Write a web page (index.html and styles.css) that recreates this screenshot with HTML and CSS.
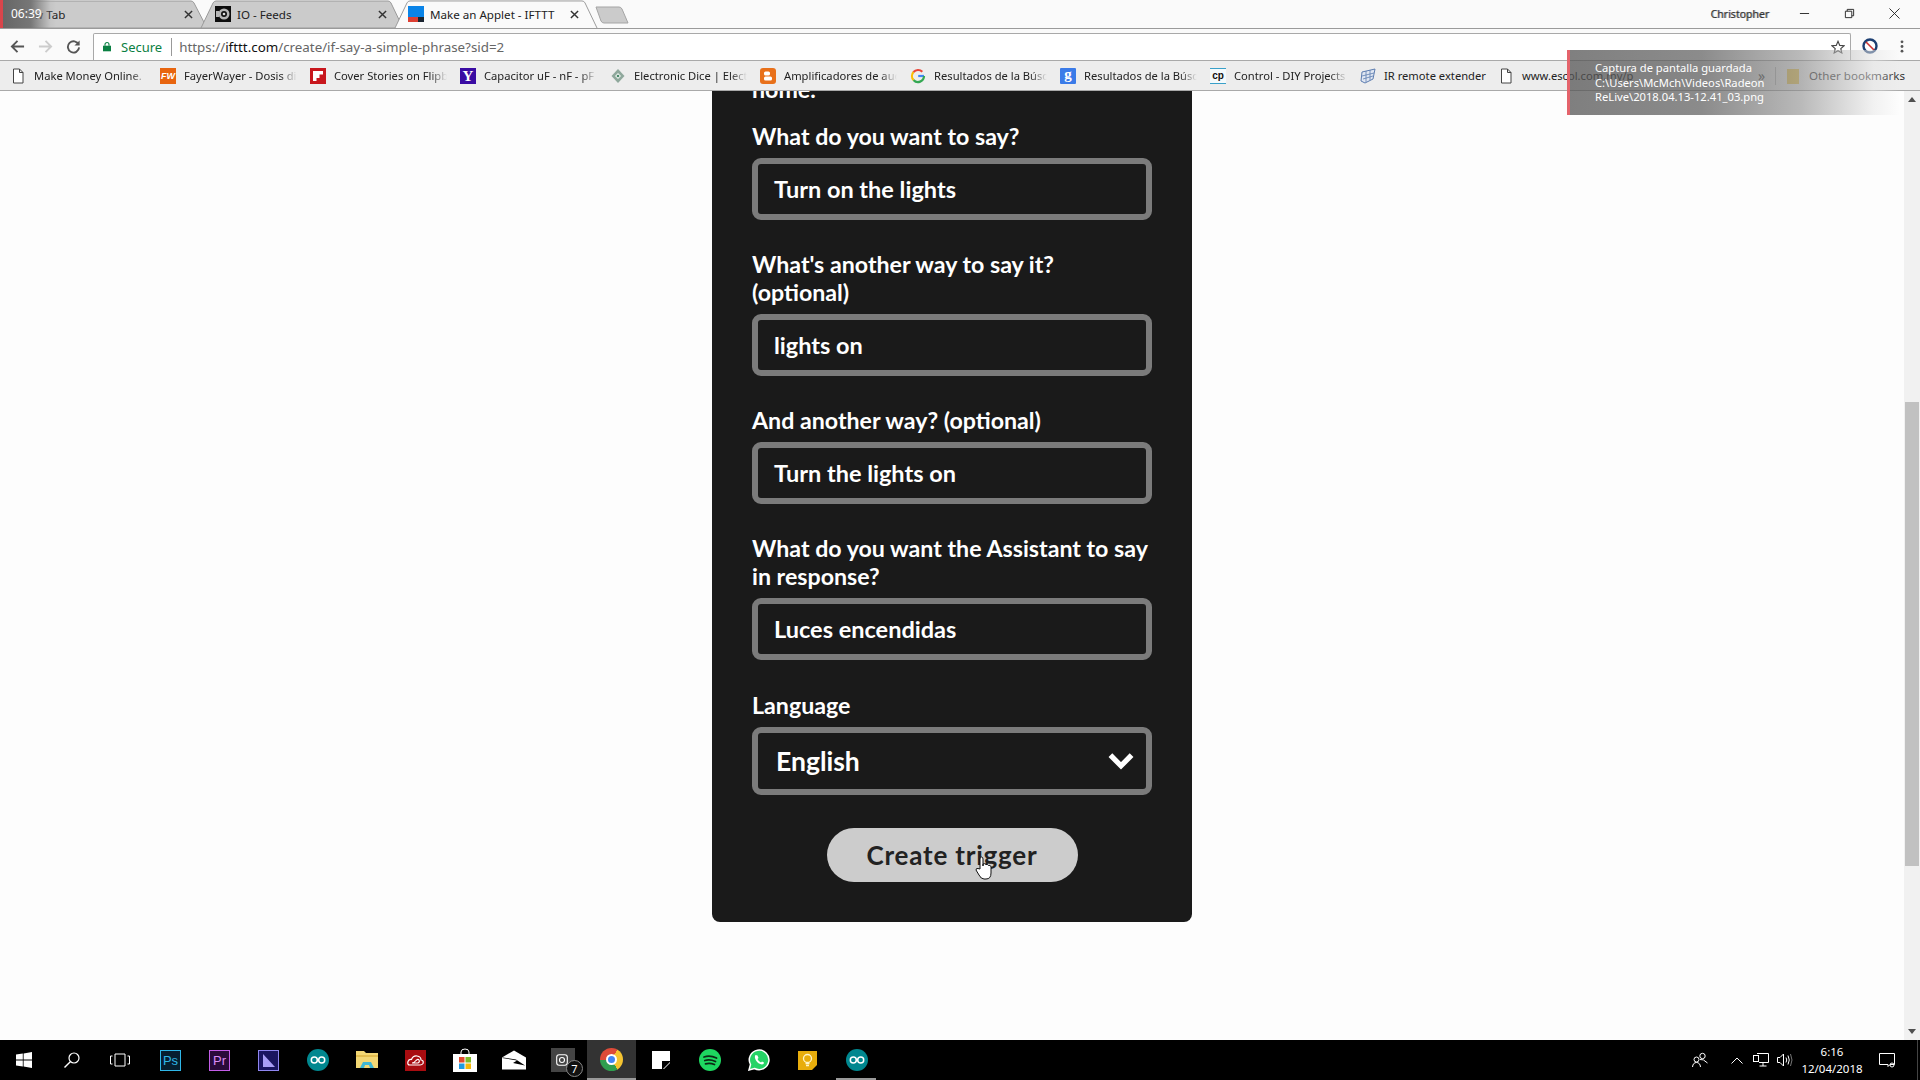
FILE: index.html
```html
<!DOCTYPE html>
<html lang="en">
<head>
<meta charset="utf-8">
<title>Make an Applet - IFTTT</title>
<link rel="stylesheet" href="styles.css">
</head>
<body>
<header class="chrome">
  <div class="tabstrip">
    <div class="tab tab-first">
      <svg class="tab-bg" viewBox="0 0 208 28" preserveAspectRatio="none"><path d="M-6 28V1H191Q193 1 194 3L207 28Z" fill="#cbcbcb" stroke="#9a9a9a"/></svg>
      <span class="tab-title tab-title-new">New Tab</span>
      <svg class="tab-x" viewBox="0 0 10 10"><path d="M1 1L9 9M9 1L1 9" stroke="#333" stroke-width="1.6"/></svg>
    </div>
    <div class="tab tab-second">
      <svg class="tab-bg" viewBox="0 0 204 28" preserveAspectRatio="none"><path d="M1 28L13 3Q14 1 16 1H188Q190 1 191 3L203 28Z" fill="#cbcbcb" stroke="#9a9a9a"/></svg>
      <svg class="fav" viewBox="0 0 16 16"><rect width="16" height="16" fill="#0d0d0d"/><circle cx="9" cy="8" r="5.5" fill="#b5b5b5"/><circle cx="9" cy="8" r="3" fill="#111"/><circle cx="9" cy="8" r="1.3" fill="#ddd"/><rect x="1" y="5" width="3" height="6" fill="#b5b5b5"/></svg>
      <span class="tab-title">IO - Feeds</span>
      <svg class="tab-x" viewBox="0 0 10 10"><path d="M1 1L9 9M9 1L1 9" stroke="#333" stroke-width="1.6"/></svg>
    </div>
    <div class="tab tab-active">
      <svg class="tab-bg" viewBox="0 0 204 29" preserveAspectRatio="none"><path d="M1 29L13 3Q14 1 16 1H188Q190 1 191 3L203 29" fill="#fafafa" stroke="#9a9a9a"/></svg>
      <svg class="fav" viewBox="0 0 16 16"><rect width="16" height="11" fill="#0a84e8"/><rect y="11" width="10" height="5" fill="#dd3f33"/><rect x="10" y="11" width="6" height="5" fill="#1b2430"/></svg>
      <span class="tab-title">Make an Applet - IFTTT</span>
      <svg class="tab-x" viewBox="0 0 10 10"><path d="M1 1L9 9M9 1L1 9" stroke="#333" stroke-width="1.6"/></svg>
    </div>
    <svg class="newtab" viewBox="0 0 34 18"><path d="M1 1H24Q26 1 27 3L33 17H9Q7 17 6 15Z" fill="#cbcbcb" stroke="#a5a5a5"/></svg>
    <div class="window-area">
      <span class="profile">Christopher</span>
      <svg class="win-btn" viewBox="0 0 12 12"><path d="M1 6H11" stroke="#222"/></svg>
      <svg class="win-btn" viewBox="0 0 12 12"><path d="M1.5 3.5H8.5V10.5H1.5ZM3.5 3.5V1.5H10.5V8.5H8.5" fill="none" stroke="#222"/></svg>
      <svg class="win-btn" viewBox="0 0 12 12"><path d="M.5 .5L11.5 11.5M11.5 .5L.5 11.5" stroke="#222"/></svg>
    </div>
  </div>
  <div class="toolbar">
    <svg class="nav" viewBox="0 0 16 16"><path d="M15 8H2M8 2L2 8L8 14" fill="none" stroke="#555" stroke-width="2"/></svg>
    <svg class="nav" viewBox="0 0 16 16"><path d="M1 8H14M8 2L14 8L8 14" fill="none" stroke="#ccc" stroke-width="2"/></svg>
    <svg class="nav" viewBox="0 0 16 16"><path d="M13.5 6A6 6 0 1 0 14 9" fill="none" stroke="#555" stroke-width="2"/><path d="M14.5 1.5V7H9Z" fill="#555"/></svg>
    <div class="omnibox">
      <svg class="lock" viewBox="0 0 10 12"><path d="M2.5 5V3.5A2.5 2.5 0 0 1 7.5 3.5V5" fill="none" stroke="#0b8043" stroke-width="1.4"/><rect y="5" width="10" height="7" fill="#0b8043"/></svg>
      <span class="secure">Secure</span>
      <span class="omni-sep"></span>
      <span class="url"><span class="url-dim">https://</span><span class="url-host">ifttt.com</span><span class="url-dim">/create/if-say-a-simple-phrase?sid=2</span></span>
      <svg class="star" viewBox="0 0 16 16"><path d="M8 1.5L10 6.2L15 6.6L11.2 9.9L12.4 14.8L8 12.2L3.6 14.8L4.8 9.9L1 6.6L6 6.2Z" fill="none" stroke="#444" stroke-width="1.3"/></svg>
    </div>
    <svg class="ext" viewBox="0 0 16 16"><circle cx="8" cy="8" r="6.5" fill="#fff" stroke="#1d3f72" stroke-width="2.4"/><path d="M4 4L12 12" stroke="#c33" stroke-width="1.6"/></svg>
    <svg class="menu" viewBox="0 0 4 16"><circle cx="2" cy="3" r="1.5" fill="#555"/><circle cx="2" cy="8" r="1.5" fill="#555"/><circle cx="2" cy="13" r="1.5" fill="#555"/></svg>
  </div>
  <nav class="bookmarks">
    <a class="bm"><svg class="fav" viewBox="0 0 16 16"><path d="M3.5 1H9.5L13 4.5V15H3.5ZM9.5 1V4.5H13" fill="#fff" stroke="#444"/></svg><span class="bm-text">Make Money Online.</span></a>
    <a class="bm"><span class="fav fav-fw">FW</span><span class="bm-text">FayerWayer - Dosis diarias</span></a>
    <a class="bm"><svg class="fav" viewBox="0 0 16 16"><rect width="16" height="16" fill="#c8171d"/><path d="M3 3H13V6.5H9.5V10H6.500V13H3Z" fill="#fff"/></svg><span class="bm-text">Cover Stories on Flipboard</span></a>
    <a class="bm"><span class="fav fav-y">Y</span><span class="bm-text">Capacitor uF - nF - pF</span></a>
    <a class="bm"><svg class="fav" viewBox="0 0 16 16"><path d="M8 1L14.500 8L8 15L1.500 8Z" fill="#8fa89c"/><path d="M8 5L11 8L8 11L5 8Z" fill="#eef3ef"/><circle cx="8" cy="8" r="1.300" fill="#4a8a6a"/></svg><span class="bm-text">Electronic Dice | Electronics</span></a>
    <a class="bm"><svg class="fav" viewBox="0 0 16 16"><rect width="16" height="16" rx="3" fill="#e8701a"/><rect x="4" y="3.500" width="6" height="4" rx="1.500" fill="#fff"/><rect x="4" y="8.500" width="8" height="4" rx="1.500" fill="#fff"/></svg><span class="bm-text">Amplificadores de audio</span></a>
    <a class="bm"><svg class="fav" viewBox="0 0 16 16"><path d="M14 8H8.200" fill="none" stroke="#4285f4" stroke-width="2.200"/><path d="M14 8A6 6 0 0 1 3.500 12" fill="none" stroke="#34a853" stroke-width="2.200"/><path d="M3.500 12A6 6 0 0 1 3.500 4" fill="none" stroke="#fbbc05" stroke-width="2.200"/><path d="M3.500 4A6 6 0 0 1 12.300 3.800" fill="none" stroke="#ea4335" stroke-width="2.200"/></svg><span class="bm-text">Resultados de la Búsqueda</span></a>
    <a class="bm"><span class="fav fav-g">g</span><span class="bm-text">Resultados de la Búsqueda</span></a>
    <a class="bm"><span class="fav fav-cp">cp</span><span class="bm-text">Control - DIY Projects</span></a>
    <a class="bm bm-ir"><svg class="fav" viewBox="0 0 16 16"><path d="M2 4L15 1L13 11L5 15L1 13Z" fill="#dfe6f2" stroke="#5d7db0"/><path d="M2 8L14 5M3 11L13 8M6 3V14M10 2V12" stroke="#5d7db0" stroke-width=".8"/></svg><span class="bm-plain">IR remote extender</span></a>
    <a class="bm bm-www"><svg class="fav" viewBox="0 0 16 16"><path d="M3.500 1H9.500L13 4.500V15H3.500ZM9.500 1V4.500H13" fill="#fff" stroke="#444"/></svg><span class="bm-plain">www.escol.com.my/p</span></a>
    <span class="bm-more">»</span>
    <span class="bm-sep"></span>
    <svg class="folder" viewBox="0 0 12 16"><path d="M0 1H12V16H0Z" fill="#e6c65c"/></svg>
    <span class="bm-other">Other bookmarks</span>
  </nav>
</header>

<div class="viewport">
  <main class="page">
    <form class="card">
      <p class="intro">home.</p>
      <div class="field">
        <label class="label">What do you want to say?</label>
        <div class="input">Turn on the lights</div>
      </div>
      <div class="field">
        <label class="label">What's another way to say it? (optional)</label>
        <div class="input">lights on</div>
      </div>
      <div class="field">
        <label class="label">And another way? (optional)</label>
        <div class="input">Turn the lights on</div>
      </div>
      <div class="field field-last">
        <label class="label">What do you want the Assistant to say in response?</label>
        <div class="input">Luces encendidas</div>
      </div>
      <div class="field field-select">
        <label class="label">Language</label>
        <div class="select">
          <span>English</span>
          <svg class="chevron" viewBox="0 0 26 17"><path d="M3 3L13 13L23 3" fill="none" stroke="#fff" stroke-width="5"/></svg>
        </div>
      </div>
      <div class="submit">
        <button class="button" type="button">Create trigger
          <svg class="cursor" viewBox="0 0 18 24"><path d="M5 13V3Q5 1 6.500 1T8 3V10V8Q9.500 7 11 8.500Q12.500 8 13.500 9.500Q15 9 16 10.500V17Q16 23 11 23H9Q6 23 4 19L1 14Q1 12 3 12.500Z" fill="#fff" stroke="#111" stroke-width="1"/></svg>
        </button>
      </div>
    </form>
  </main>
  <aside class="scrollbar">
    <span class="arrow-up"></span>
    <div class="track"><div class="thumb"></div></div>
    <span class="arrow-down"></span>
  </aside>
</div>

<footer class="taskbar">
  <div class="tb-slot tb-48"><svg class="ti-16" viewBox="0 0 16 16"><path d="M0 2.500L6.800 1.500V7.600H0ZM7.600 1.400L16 0V7.600H7.600ZM0 8.400H6.800V14.500L0 13.500ZM7.600 8.400H16V16L7.600 14.600Z" fill="#fff"/></svg></div>
  <div class="tb-slot tb-48"><svg class="ti-16" viewBox="0 0 16 16"><circle cx="10" cy="6" r="5" fill="none" stroke="#fff" stroke-width="1.200"/><path d="M6.300 9.700L.5 15.500" stroke="#fff" stroke-width="1.400"/></svg></div>
  <div class="tb-slot tb-48"><svg class="ti-20" viewBox="0 0 20 16"><path d="M5 2H15V14H5ZM2.500 4H.5V12H2.500M17.500 4H19.500V12H17.500" fill="none" stroke="#fff"/></svg></div>
  <div class="tb-slot tb-first"><span class="app-sq app-ps">Ps</span></div>
  <div class="tb-slot"><span class="app-sq app-pr">Pr</span></div>
  <div class="tb-slot"><svg class="ti-21" viewBox="0 0 21 21"><rect x=".5" y=".5" width="20" height="20" fill="#1a1560" stroke="#8f86f0"/><path d="M5 4L17 17H5Z" fill="#a89df5"/></svg></div>
  <div class="tb-slot"><svg class="ti-22" viewBox="0 0 22 22"><circle cx="11" cy="11" r="11" fill="#00878f"/><circle cx="7.300" cy="11" r="3" fill="none" stroke="#fff" stroke-width="1.500"/><circle cx="14.700" cy="11" r="3" fill="none" stroke="#fff" stroke-width="1.500"/></svg></div>
  <div class="tb-slot"><svg class="ti-22" viewBox="0 0 22 22"><path d="M0 2H8L10 4H22V19H0Z" fill="#f3d774"/><path d="M0 6H22V8H0Z" fill="#e3bd4e"/><path d="M4 19L7 13H15L18 19H14L13 16H9L8 19Z" fill="#3fb6d3"/></svg></div>
  <div class="tb-slot"><svg class="ti-21" viewBox="0 0 21 21"><rect width="21" height="21" fill="#a80c10"/><path d="M5 15Q2 15 3 11.500Q4 9 6.500 9.500Q8 5.500 12 6Q16 6.500 16 10Q19 10.500 18 13.500Q17 15 15 15ZM7 13Q9 13 11 10.500Q13 8.500 14 10Q15 12 13 13Z" fill="none" stroke="#fff" stroke-width="1.200"/></svg></div>
  <div class="tb-slot"><svg class="ti-24" viewBox="0 0 24 24"><path d="M8 6V4Q8 1 12 1T16 4V6" fill="none" stroke="#fff"/><rect y="6" width="24" height="18" fill="#fff"/><rect x="6" y="9" width="5.500" height="5.500" fill="#e2492f"/><rect x="12.500" y="9" width="5.500" height="5.500" fill="#7db928"/><rect x="6" y="15.500" width="5.500" height="5.500" fill="#1f9ae0"/><rect x="12.500" y="15.500" width="5.500" height="5.500" fill="#f5b70b"/></svg></div>
  <div class="tb-slot"><svg class="ti-24" viewBox="0 0 24 19"><path d="M0 7L12 0L24 7V19H0Z" fill="#fff"/><path d="M0 7.500L15 10L11 12.500L23 15L14 9L1 7Z" fill="#000"/></svg></div>
  <div class="tb-slot tb-ig"><span class="ig-box"><svg class="ti-12" viewBox="0 0 12 12"><rect x=".7" y=".7" width="10.600" height="10.600" rx="2.500" fill="none" stroke="#fff" stroke-width="1.100"/><circle cx="6" cy="6" r="2.500" fill="none" stroke="#fff" stroke-width="1.100"/></svg></span><span class="ig-badge">7</span></div>
  <div class="tb-slot tb-active"><span class="chrome-logo"><span class="chrome-core"></span></span></div>
  <div class="tb-slot"><svg class="ti-18" viewBox="0 0 18 18"><path d="M0 0H18V12L12 18H0Z" fill="#fff"/><path d="M18 10V11L11 18H10V10Z" fill="#000"/></svg></div>
  <div class="tb-slot"><svg class="ti-22" viewBox="0 0 22 22"><circle cx="11" cy="11" r="11" fill="#1ed760"/><path d="M5 8Q11 6 17.500 9M5.800 11.500Q11 10 16.500 12.500M6.500 14.800Q11 13.500 15.500 15.500" fill="none" stroke="#0c2a15" stroke-width="1.800" stroke-linecap="round"/></svg></div>
  <div class="tb-slot"><svg class="ti-22" viewBox="0 0 22 22"><path d="M1 21L2.500 15.500A9.800 9.800 0 1 1 6.500 19.500Z" fill="#25d366" stroke="#fff" stroke-width="1.500"/><path d="M7.500 6Q6 8 8 11.500T14 15.500Q16 15.500 16 13.500L14 12.500L13 13.500Q10.500 12.500 9.500 10L10.500 9L9.500 6.500Z" fill="#fff"/></svg></div>
  <div class="tb-slot"><svg class="ti-19" viewBox="0 0 19 19"><path d="M0 0H19V14L14 19H0Z" fill="#e8ad0c"/><circle cx="9.500" cy="7.500" r="4" fill="none" stroke="#fff5c8" stroke-width="1.300"/><path d="M7.500 12.500H11.500M8 14.500H11" stroke="#fff5c8" stroke-width="1.300"/></svg></div>
  <div class="tb-slot tb-running"><svg class="ti-22" viewBox="0 0 22 22"><circle cx="11" cy="11" r="11" fill="#00878f"/><circle cx="7.300" cy="11" r="3" fill="none" stroke="#fff" stroke-width="1.500"/><circle cx="14.700" cy="11" r="3" fill="none" stroke="#fff" stroke-width="1.500"/></svg></div>
  <div class="tray">
    <svg class="ti-16" viewBox="0 0 16 16"><circle cx="10.500" cy="4" r="2.700" fill="none" stroke="#fff"/><circle cx="4.500" cy="7.500" r="2.500" fill="none" stroke="#fff"/><path d="M.5 15Q1 10.500 4.500 10.500T8.500 15M8 7.500Q11 6.500 15.500 11" fill="none" stroke="#fff"/></svg>
    <svg class="tray-chev" viewBox="0 0 12 7"><path d="M.5 6.500L6 1L11.500 6.500" fill="none" stroke="#fff"/></svg>
    <svg class="tray-net" viewBox="0 0 16 14"><path d="M4 .5H15.500V9.500H6M10 9.500V13M6.500 13H13.500" fill="none" stroke="#fff"/><rect x=".5" y="2.500" width="5" height="6" fill="#000" stroke="#fff"/></svg>
    <svg class="tray-vol" viewBox="0 0 16 14"><path d="M.5 4.500H3L6.500 1V13L3 9.500H.5ZM9 4.500Q10.500 7 9 9.500M11 2.500Q13.500 7 11 11.500" fill="none" stroke="#fff"/><path d="M13.500 1Q16.500 7 13.500 13" fill="none" stroke="#777"/></svg>
    <div class="clock"><span>6:16</span><span>12/04/2018</span></div>
    <svg class="tray-note" viewBox="0 0 16 15"><path d="M.5 .5H15.500V11.500H11L9 13.500V11.500H.5Z" fill="none" stroke="#fff"/><circle cx="13" cy="12" r="2" fill="none" stroke="#fff"/></svg>
    <span class="show-desktop"></span>
  </div>
</footer>

<div class="rec-timer">06:39</div>
<div class="toast">
  <div>Captura de pantalla guardada</div>
  <div>C:\Users\McMch\Videos\Radeon</div>
  <div>ReLive\2018.04.13-12.41_03.png</div>
</div>
</body>
</html>
```

FILE: styles.css
```css
* { box-sizing: border-box; }
html, body { margin: 0; height: 100%; }
body {
  width: 1920px; height: 1080px; overflow: hidden; position: relative;
  display: flex; flex-direction: column;
  font-family: "Noto Sans", "Open Sans", sans-serif; background: #fdfdfd;
}
.chrome { flex: none; }

/* Tabs */
.tabstrip { height: 29px; display: flex; background: #fafafa; border-bottom: 1px solid #9a9a9a; }
.tab { position: relative; height: 28px; display: flex; align-items: center; flex: none; font-size: 11.6px; color: #222; }
.tab-bg { position: absolute; left: 0; top: 0; width: 100%; height: 100%; }
.tab > :not(.tab-bg) { position: relative; }
.tab-first { width: 208px; padding-left: 19px; }
.tab-second { width: 204px; margin-left: -8px; padding-left: 15px; }
.tab-active { width: 204px; margin-left: -10px; padding-left: 14px; z-index: 1; }
.fav { width: 16px; height: 16px; flex: none; display: block; }
.tab-title { margin-left: 6px; white-space: nowrap; }
.tab-title-new { margin-left: 0; }
.tab-x { width: 9px; height: 9px; margin-left: auto; }
.tab-first .tab-x { margin-right: 15px; }
.tab-second .tab-x { margin-right: 17px; }
.tab-active .tab-x { margin-right: 19px; }
.newtab { width: 34px; height: 18px; margin: 6px 0 0 -3px; flex: none; }
.window-area { margin-left: auto; display: flex; align-items: center; height: 27px; }
.profile { font-size: 10.5px; color: #333; margin-right: 30px; text-shadow: 1px 0 #999; }
.win-btn { width: 11px; height: 11px; margin-right: 34px; }
.win-btn:last-child { margin-right: 20px; }

/* Toolbar */
.toolbar { height: 32px; padding: 4px 0 1px 10px; background: #fafafa; display: flex; align-items: center; border-bottom: 1px solid #a9a9a9; }
.nav { width: 15px; height: 15px; margin-right: 13px; flex: none; }
.omnibox { margin-left: -1px; width: 1758px; height: 27px; flex: none; border: 1px solid #a9a9a9; border-bottom: 0; border-radius: 2px 2px 0 0; background: #fff; display: flex; align-items: center; padding: 0 5px 0 8px; font-size: 13px; }
.lock { width: 8px; height: 11px; margin-right: 10px; margin-left: 1px; }
.secure { color: #0b8043; }
.omni-sep { width: 1px; height: 18px; background: #999; margin: 0 7px 0 9px; }
.url { color: #555; font-size: 13.35px; }
.url-dim { color: #666; }
.url-host { color: #111; }
.star { width: 14px; height: 14px; margin-left: auto; }
.ext { width: 16px; height: 16px; margin-left: 11px; flex: none; }
.menu { width: 4px; height: 15px; margin-left: 22px; flex: none; }

/* Bookmarks */
.bookmarks { height: 30px; padding-left: 10px; background: #ededed; border-bottom: 1px solid #a9a9a9; display: flex; align-items: center; font-size: 11.2px; color: #222; overflow: hidden; }
.bm { width: 150px; flex: none; display: flex; align-items: center; gap: 8px; white-space: nowrap; }
.bm-ir { width: 138px; }
.bm-www { width: 140px; }
.bm-text { width: 113px; overflow: hidden; -webkit-mask-image: linear-gradient(to right, #000 85%, transparent); mask-image: linear-gradient(to right, #000 85%, transparent); }
.bm-plain { flex: none; }
.fav-fw { background: #e8650f; color: #fff; font: italic 700 9px/16px "Liberation Sans", sans-serif; text-align: center; }
.fav-y { background: #3a0ca3; color: #fff; font: 700 15px/16px "Liberation Serif", serif; text-align: center; }
.fav-g { background: #3b7be8; color: #fff; font: 700 15px/13px "Liberation Serif", serif; text-align: center; border-radius: 1px; }
.fav-cp { background: #f4fafc; color: #111; font: 700 10px/14px "Liberation Sans", sans-serif; text-align: center; border-top: 1px solid #39a0c9; border-bottom: 1px solid #39a0c9; }
.bm-more { margin-left: auto; font-size: 14px; color: #555; margin-right: 10px; }
.bm-sep { width: 1px; height: 18px; background: #bbb; margin-right: 11px; }
.folder { width: 12px; height: 16px; margin-right: 10px; flex: none; }
.bm-other { margin-right: 15px; color: #333; white-space: nowrap; font-size: 11.6px; }

/* Page */
.viewport { flex: 1; min-height: 0; display: flex; }
.page { flex: 1; min-width: 0; overflow: hidden; background: #fdfdfd; }
.card {
  width: 480px; margin: -16px auto 0; padding: 0 40px 40px;
  background: #1a1a1a; border-radius: 0 0 8px 8px; color: #fff;
  font-family: Lato, "Noto Sans", sans-serif; font-weight: 700;
}
.intro { margin: 0 0 19px; font-size: 23.2px; line-height: 28px; }
.field { margin-bottom: 30px; }
.field-last { margin-bottom: 31px; }
.field-select { margin-bottom: 33px; }
.label { display: block; font-size: 23.2px; line-height: 28px; margin-bottom: 8px; }
.input { height: 62px; border: 6px solid #7b7b7b; border-radius: 9px; padding: 0 16px; font-size: 23.5px; line-height: 50px; }
.select { height: 68px; border: 6px solid #7b7b7b; border-radius: 9px; padding: 0 11px 0 18px; font-size: 26.5px; display: flex; align-items: center; justify-content: space-between; }
.chevron { width: 28px; height: 18px; }
.submit { display: flex; justify-content: center; }
.button {
  position: relative; width: 251px; height: 54px; padding: 0; border: 0; border-radius: 27px;
  background: #cccccc; color: #222; font: 700 26px/54px Lato, sans-serif; letter-spacing: .8px;
}
.cursor { position: absolute; left: 148px; top: 28px; width: 18px; height: 24px; }

/* Scrollbar */
.scrollbar { width: 16px; flex: none; background: #f1f1f1; display: flex; flex-direction: column; align-items: center; }
.arrow-up, .arrow-down { flex: none; width: 0; height: 0; border-left: 4px solid transparent; border-right: 4px solid transparent; margin: 6px 0; }
.arrow-up { border-bottom: 5px solid #505050; }
.arrow-down { border-top: 5px solid #505050; }
.track { flex: 1; width: 100%; padding: 294px 1px 0; }
.thumb { height: 464px; background: #c1c1c1; }

/* Taskbar */
.taskbar { flex: none; height: 40px; background: #000; display: flex; align-items: stretch; }
.tb-slot { width: 49px; flex: none; display: flex; align-items: center; justify-content: center; position: relative; }
.tb-48 { width: 48px; }
.tb-first { margin-left: 2px; }
.ti-12 { width: 12px; height: 12px; display: block; }
.ti-16 { width: 16px; height: 16px; display: block; }
.ti-18 { width: 18px; height: 18px; }
.ti-19 { width: 19px; height: 19px; }
.ti-20 { width: 20px; height: 16px; }
.ti-21 { width: 21px; height: 21px; }
.ti-22 { width: 22px; height: 22px; }
.ti-24 { width: 24px; height: 24px; }
.app-sq { width: 21px; height: 21px; font: 400 13px/19px "Liberation Sans", sans-serif; text-align: center; border: 1px solid; }
.app-ps { color: #2fb6e8; border-color: #2fb6e8; background: #061e30; }
.app-pr { color: #d98bf5; border-color: #c45de8; background: #2a0a3a; }
.ig-box { width: 24px; height: 24px; background: #444; display: flex; align-items: center; justify-content: center; padding-right: 2px; }
.ig-badge { position: absolute; left: 28px; top: 20px; width: 17px; height: 17px; border-radius: 50%; background: #111; border: 1px solid #888; color: #fff; font-size: 11px; line-height: 15px; text-align: center; }
.tb-active { background: #333; border-bottom: 2px solid #999; }
.chrome-logo { width: 23px; height: 23px; border-radius: 50%; background: conic-gradient(#dd4b39 0 30deg, #f5c431 30deg 150deg, #2f9e4f 150deg 270deg, #dd4b39 270deg); display: flex; align-items: center; justify-content: center; }
.chrome-core { width: 11px; height: 11px; border-radius: 50%; background: #4285f4; border: 2px solid #fff; }
.tb-running::after { content: ""; position: absolute; left: 4px; right: 5px; bottom: 0; height: 2px; background: #999; }
.tray { margin-left: auto; display: flex; align-items: center; color: #fff; }
.tray-chev { width: 12px; height: 7px; margin-left: 23px; }
.tray-net { width: 16px; height: 14px; margin-left: 10px; }
.tray-vol { width: 16px; height: 14px; margin-left: 8px; }
.clock { width: 78px; margin-left: 0; display: flex; flex-direction: column; align-items: center; font: 11.5px/17px "Noto Sans", sans-serif; }
.tray-note { width: 16px; height: 15px; margin-left: 8px; }
.show-desktop { width: 1px; height: 100%; margin-left: 22px; margin-right: 2px; background: #444; }

/* Overlays */
.rec-timer {
  position: absolute; left: 0; top: 0; width: 56px; height: 28px; padding-left: 11px;
  font: 12px/28px "Noto Sans", sans-serif; color: #fff;
  background: linear-gradient(to right, #d9454b 0 3px, #666 3px, #777 55%, rgba(170,170,170,.2) 90%, rgba(200,200,200,0));
}
.toast {
  position: absolute; left: 1567px; top: 50px; width: 333px; height: 65px;
  padding: 11px 0 0 25px; border-left: 3px solid #e4636b;
  font: 11.200px/14.500px "Noto Sans", sans-serif; color: #fff;
  background: linear-gradient(to right, rgba(85,85,85,.75) 0, rgba(95,95,95,.72) 40%, rgba(140,140,140,.6) 70%, rgba(230,230,230,.5) 92%, rgba(255,255,255,0));
}
```
